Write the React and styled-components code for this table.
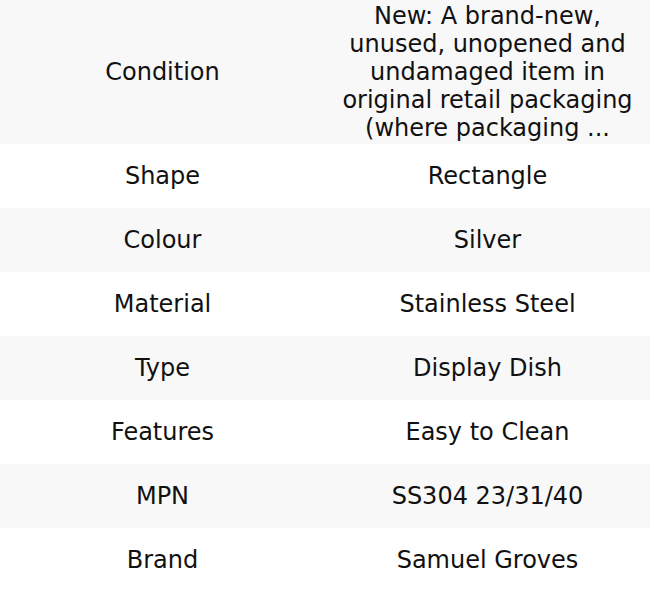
import React from "react";
import styled, { createGlobalStyle } from "styled-components";

const Global = createGlobalStyle`
  html, body { margin: 0; padding: 0; background: #ffffff; }
  body { font-family: "DejaVu Sans", "Liberation Sans", sans-serif; }
`;

const Table = styled.div`
  width: 650px;
  display: flex;
  flex-direction: column;
`;

const Row = styled.div`
  display: grid;
  grid-template-columns: 325px 325px;
  min-height: 64px;
  padding: 2px 0;
  box-sizing: border-box;
  align-items: center;
  background: ${(p) => (p.$shaded ? "#f8f8f8" : "#ffffff")};
`;

const Cell = styled.div`
  font-size: 24px;
  line-height: 28px;
  color: #111111;
  text-align: center;
  padding: 0 8px;
`;

const rows = [
  [
    "Condition",
    "New: A brand-new, unused, unopened and undamaged item in original retail packaging (where packaging ...",
  ],
  ["Shape", "Rectangle"],
  ["Colour", "Silver"],
  ["Material", "Stainless Steel"],
  ["Type", "Display Dish"],
  ["Features", "Easy to Clean"],
  ["MPN", "SS304 23/31/40"],
  ["Brand", "Samuel Groves"],
];

export default function App() {
  return (
    <>
      <Global />
      <Table>
        {rows.map(([k, v], i) => (
          <Row key={k} $shaded={i % 2 === 0}>
            <Cell>{k}</Cell>
            <Cell>{v}</Cell>
          </Row>
        ))}
      </Table>
    </>
  );
}
